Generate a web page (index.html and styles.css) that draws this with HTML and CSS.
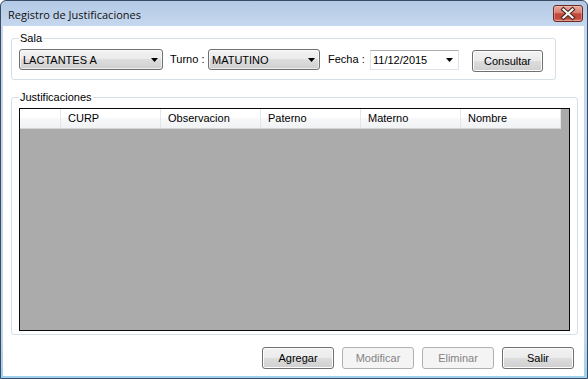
FILE: index.html
```html
<!DOCTYPE html>
<html lang="es">
<head>
    <meta charset="UTF-8">
    <title>Registro de Justificaciones</title>
    <link rel="stylesheet" href="styles.css">
</head>
<body>
    <div class="window">
        <div class="titlebar">
            <span class="title">Registro de Justificaciones</span>
            <button class="close" title="Cerrar">
                <svg width="28" height="15" viewBox="0 0 28 15">
                    <path d="M9.5 3.5 L18.5 11.5 M18.5 3.5 L9.5 11.5" stroke="#4a2520" stroke-width="4.2" stroke-linecap="square"/>
                    <path d="M9.5 3.5 L18.5 11.5 M18.5 3.5 L9.5 11.5" stroke="#f4f4f4" stroke-width="2.2" stroke-linecap="square"/>
                </svg>
            </button>
        </div>
        <div class="client">
            <fieldset class="group group-sala">
                <legend>Sala</legend>
                <div class="filters">
                    <div class="combo combo-sala">
                        <span>LACTANTES A</span>
                        <svg class="arrow" width="7" height="4" viewBox="0 0 7 4"><polygon points="0,0 7,0 3.5,4" fill="#000"/></svg>
                    </div>
                    <span class="label label-turno">Turno :</span>
                    <div class="combo combo-turno">
                        <span>MATUTINO</span>
                        <svg class="arrow" width="7" height="4" viewBox="0 0 7 4"><polygon points="0,0 7,0 3.5,4" fill="#000"/></svg>
                    </div>
                    <span class="label label-fecha">Fecha :</span>
                    <div class="date">
                        <span>11/12/2015</span>
                        <svg class="arrow" width="7" height="4" viewBox="0 0 7 4"><polygon points="0,0 7,0 3.5,4" fill="#000"/></svg>
                    </div>
                    <button class="btn btn-consultar">Consultar</button>
                </div>
            </fieldset>
            <fieldset class="group group-just">
                <legend>Justificaciones</legend>
                <div class="grid">
                    <div class="grid-header">
                        <div class="cell corner"></div>
                        <div class="cell">CURP</div>
                        <div class="cell">Observacion</div>
                        <div class="cell">Paterno</div>
                        <div class="cell">Materno</div>
                        <div class="cell">Nombre</div>
                    </div>
                </div>
            </fieldset>
            <div class="actions">
                <button class="btn">Agregar</button>
                <button class="btn" disabled>Modificar</button>
                <button class="btn" disabled>Eliminar</button>
                <button class="btn">Salir</button>
            </div>
        </div>
    </div>
</body>
</html>
```

FILE: styles.css
```css
body {
    margin: 0;
    font-family: "Liberation Sans", Arial, sans-serif;
    font-size: 11px;
    color: #000;
    background: #fff;
}
.window {
    width: 588px;
    height: 379px;
    box-sizing: border-box;
    border: 1px solid #3a4c63;
    border-radius: 6px 6px 0 0;
    background: linear-gradient(#b3c9e5, #c6d8ee 26px, #c0d4eb 90%, #9fd0ef);
    padding: 0 3px 2px 2px;
    display: flex;
    flex-direction: column;
}
.titlebar {
    height: 25px;
    display: flex;
    align-items: flex-start;
    padding-left: 5px;
}
.title {
    font-family: "Open Sans", "Noto Sans", sans-serif;
    font-size: 11px;
    line-height: 15px;
    margin-top: 6px;
    color: #111;
}
.close {
    margin-left: auto;
    margin-right: 1px;
    margin-top: 4px;
    width: 30px;
    height: 17px;
    padding: 0;
    box-sizing: border-box;
    border: 1px solid #6b2a23;
    border-radius: 3px;
    background: linear-gradient(#e7a89b, #d87d6f 45%, #c4493b 52%, #c24a3c 85%, #dc8878);
    box-shadow: inset 0 0 0 1px rgba(255, 220, 210, 0.35);
    display: flex;
    align-items: center;
    justify-content: center;
}
.client {
    flex: 1;
    background: #fff;
    display: flex;
    flex-direction: column;
}
.group {
    border: 1px solid #d5dfe5;
    border-radius: 3px;
    min-width: 0;
}
.group legend {
    padding: 0 1px;
    line-height: 13px;
}
.group-sala {
    margin: 6px 28px 0 8px;
    padding: 4px 7px 7px 7px;
}
.group-just {
    margin: 11px 6px 0 8px;
    padding: 4px 6px 3px 7px;
}
.filters {
    display: flex;
    align-items: flex-start;
    height: 23px;
}
.combo {
    box-sizing: border-box;
    height: 21px;
    border: 1px solid #707070;
    border-radius: 3px;
    background: linear-gradient(#f2f2f2, #ebebeb 50%, #dddddd 50%, #cfcfcf);
    box-shadow: inset 0 0 0 1px rgba(255, 255, 255, 0.6);
    display: flex;
    align-items: center;
    padding-left: 3px;
}
.combo-sala {
    width: 144px;
}
.combo-turno {
    width: 112px;
}
.arrow {
    margin-left: auto;
    margin-right: 4px;
}
.label {
    line-height: 21px;
}
.label-turno {
    margin-left: 7px;
    width: 38px;
}
.label-fecha {
    margin-left: 8px;
    width: 42px;
}
.date {
    box-sizing: border-box;
    width: 89px;
    height: 20px;
    margin-top: 1px;
    border: 1px solid #e2e3ea;
    border-top-color: #abadb3;
    background: #fff;
    display: flex;
    align-items: center;
    padding-left: 2px;
}
.date .arrow {
    margin-right: 5px;
}
.btn {
    box-sizing: border-box;
    width: 72px;
    height: 22px;
    padding: 0;
    border: 1px solid #707070;
    border-radius: 3px;
    background: linear-gradient(#f2f2f2, #ebebeb 50%, #dddddd 50%, #cfcfcf);
    box-shadow: inset 0 0 0 1px #fcfcfc;
    font-family: "Liberation Sans", Arial, sans-serif;
    font-size: 11px;
    color: #000;
}
.btn:disabled {
    border-color: #adb2b5;
    background: #f4f4f4;
    box-shadow: none;
    color: #838383;
}
.btn-consultar {
    width: 71px;
    margin-left: 13px;
    margin-top: 1px;
}
.grid {
    box-sizing: border-box;
    width: 551px;
    height: 223px;
    border: 1px solid #0a0a0a;
    background: #ababab;
}
.grid-header {
    display: flex;
    width: 541px;
    height: 20px;
}
.cell {
    box-sizing: border-box;
    width: 100px;
    height: 20px;
    padding-left: 7px;
    line-height: 19px;
    background: linear-gradient(#ffffff, #ffffff 50%, #f7f8fa 50%, #f1f2f4);
    border-right: 1px solid #e3e5e8;
    border-bottom: 1px solid #d5d5d5;
}
.cell.corner {
    width: 41px;
}
.actions {
    display: flex;
    justify-content: flex-end;
    gap: 8px;
    margin: 12px 10px 0 0;
}
```
